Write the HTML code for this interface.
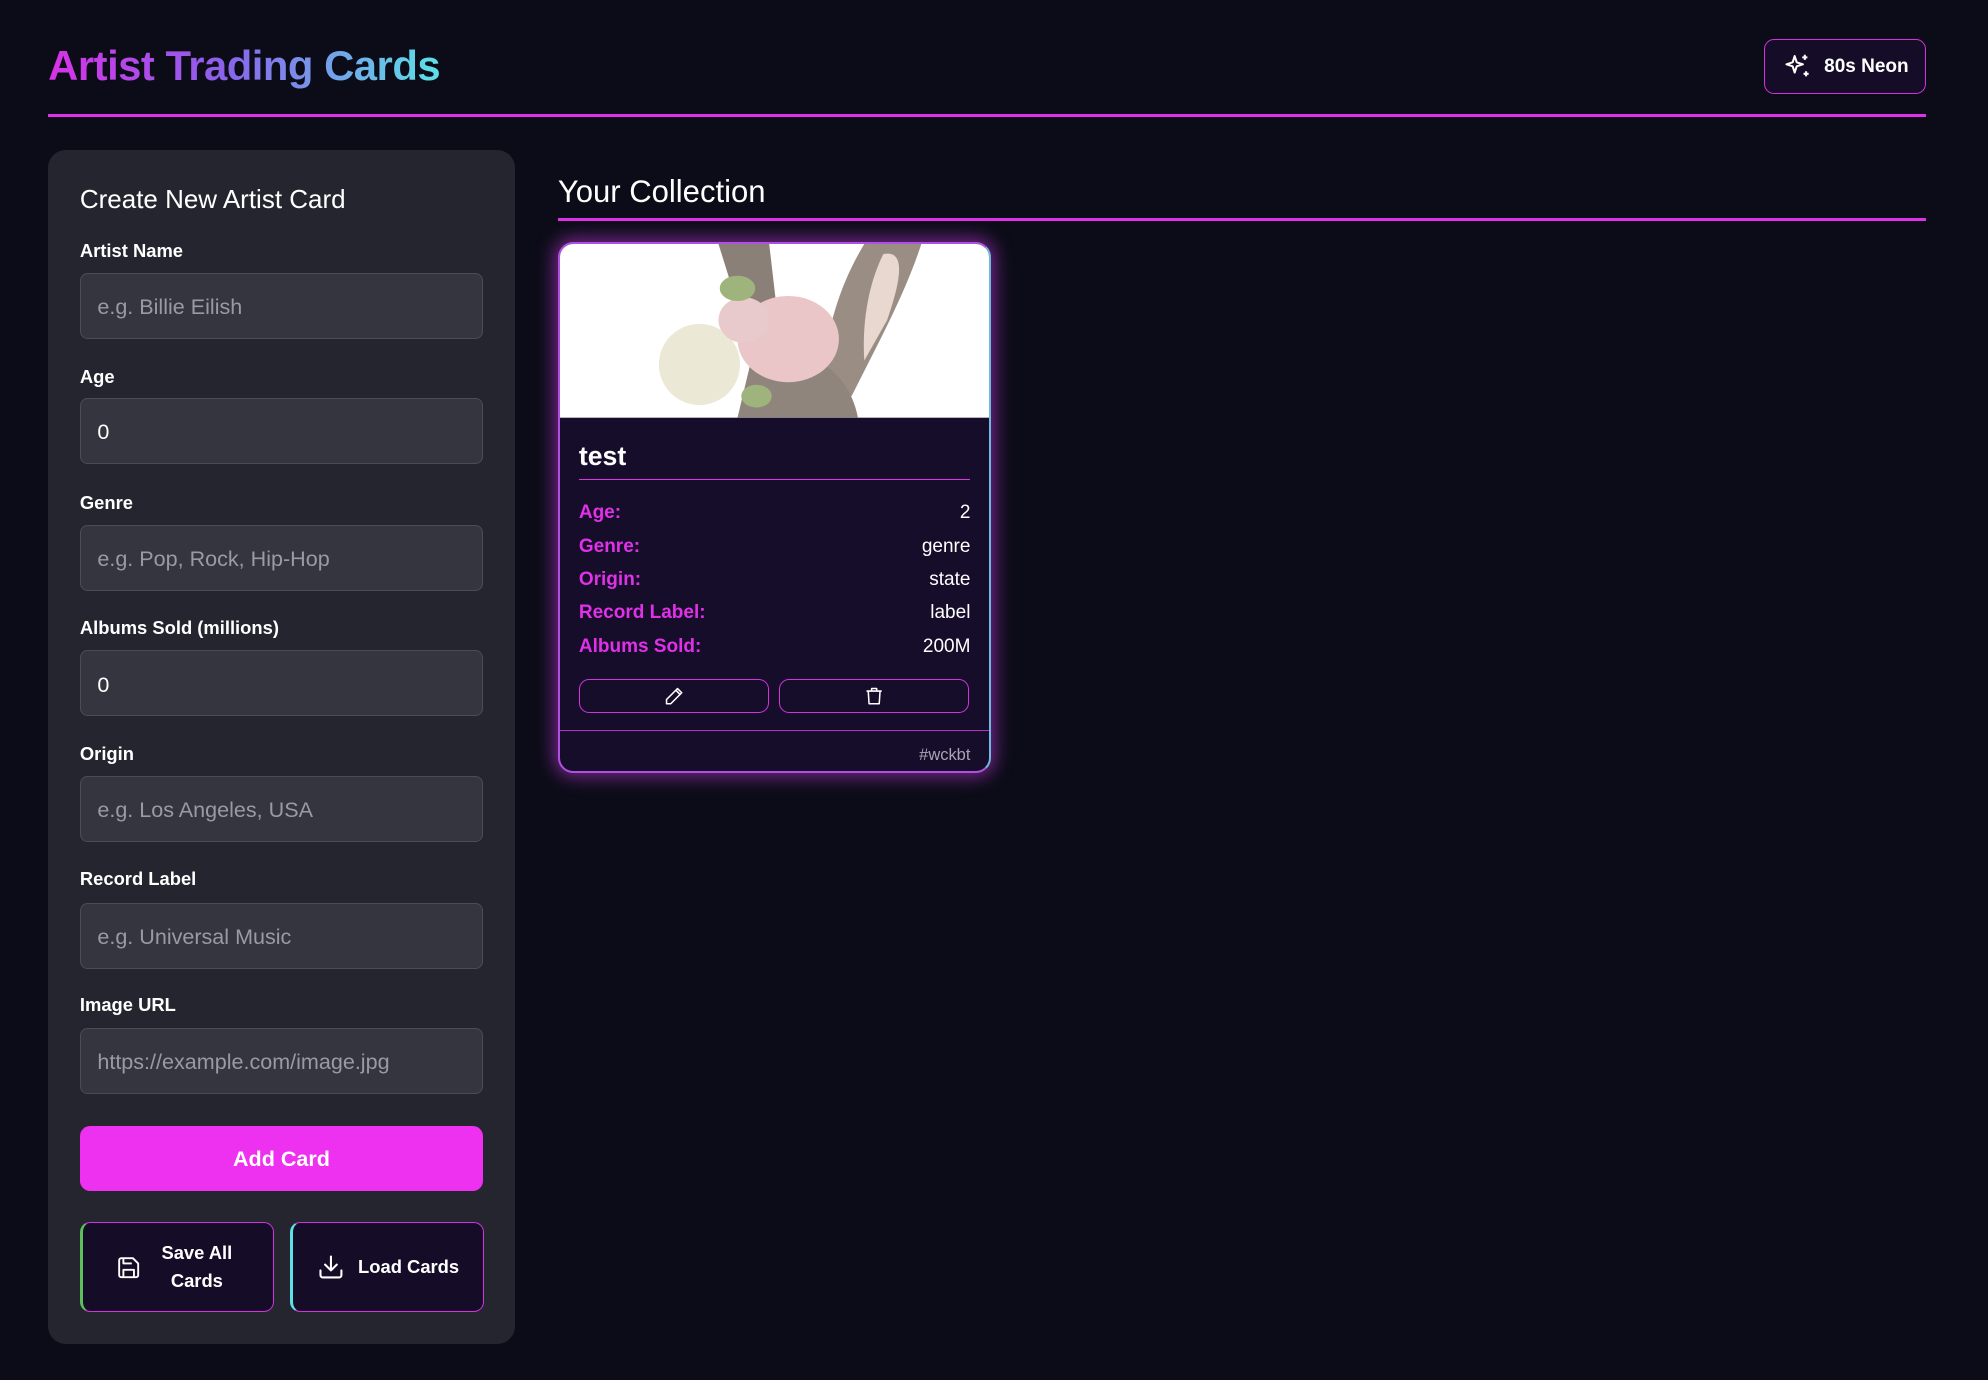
<!DOCTYPE html>
<html><head><meta charset="utf-8">
<style>
*{box-sizing:border-box;margin:0;padding:0}
html,body{background:#0c0c18;width:1988px;height:1380px;overflow:hidden}
#w{zoom:1.26786;width:1568px;height:1088px;position:relative;font-family:"Liberation Sans",sans-serif;color:#fff}
.a{position:absolute}
h1{position:absolute;left:38px;top:33px;font-size:33px;font-weight:bold;background:linear-gradient(90deg,#d832e6,#8a62ea 45%,#5be2e8);-webkit-background-clip:text;background-clip:text;color:transparent;letter-spacing:-0.4px}
.neon{left:1391px;top:31px;width:128px;height:43px;border:1px solid #d630e0;border-radius:8px;background:#150d27;font-size:15px;font-weight:bold;display:flex;align-items:center;padding-left:14px;gap:9px}
.line{height:2px;background:#e030e8}
.panel{left:38px;top:118px;width:368px;height:942px;background:#25252f;border-radius:14px}
.lbl{left:63px;font-size:14.5px;font-weight:bold;color:#fff}
.inp{left:63px;width:318px;height:52px;background:#35353f;border:1px solid #4c4c57;border-radius:6px;font-size:17px;color:#9a9aa2;padding-left:13px;padding-top:2px;display:flex;align-items:center}
.inp.v{color:#fff}
.btn2{top:964px;height:71px;width:153px;border:1px solid #d630e0;border-radius:8px;background:#150d27;font-size:14.5px;font-weight:bold;display:flex;align-items:center;justify-content:center;gap:10px;text-align:center;line-height:22px}
.card{left:440px;top:191px;width:342px;height:419px;border-radius:12px;background:#150d2a;box-shadow:0 0 14px 3px rgba(200,60,230,.55);border:2px solid #b050e0;border-right-color:#70b8e0;overflow:hidden}
.row{left:15px;right:15px;display:flex;justify-content:space-between;font-size:15px}
.row b{color:#e030e8}
.sb{top:343px;height:27px;width:150px;border:1px solid #d630e0;border-radius:8px;display:flex;align-items:center;justify-content:center}
</style></head><body><div id="w">
<h1>Artist Trading Cards</h1>
<div class="a neon"><svg width="24" height="24" viewBox="0 0 24 24" fill="none" stroke="#fff" stroke-width="1.6" stroke-linejoin="round"><path d="M10 4l1.6 4.9L16.5 10.5l-4.9 1.6L10 17l-1.6-4.9L3.5 10.5l4.9-1.6z"/><path d="M18 3v4M16 5h4M19 16v4M17 18h4"/></svg>80s Neon</div>
<div class="a line" style="left:38px;top:90px;width:1481px"></div>
<div class="a panel"></div>
<div class="a" style="left:63px;top:145px;font-size:20.5px">Create New Artist Card</div>
<div class="a lbl" style="top:189px">Artist Name</div><div class="a inp" style="top:215px">e.g. Billie Eilish</div>
<div class="a lbl" style="top:289px">Age</div><div class="a inp v" style="top:314px">0</div>
<div class="a lbl" style="top:388px">Genre</div><div class="a inp" style="top:414px">e.g. Pop, Rock, Hip-Hop</div>
<div class="a lbl" style="top:487px">Albums Sold (millions)</div><div class="a inp v" style="top:513px">0</div>
<div class="a lbl" style="top:586px">Origin</div><div class="a inp" style="top:612px">e.g. Los Angeles, USA</div>
<div class="a lbl" style="top:685px">Record Label</div><div class="a inp" style="top:712px">e.g. Universal Music</div>
<div class="a lbl" style="top:784px">Image URL</div><div class="a inp" style="top:811px">https://example.com/image.jpg</div>
<div class="a" style="left:63px;top:888px;width:318px;height:51px;background:#ee30f0;border-radius:8px;font-size:17px;font-weight:bold;display:flex;align-items:center;justify-content:center;padding-top:2px">Add Card</div>
<div class="a btn2" style="left:63px;border-left:3px solid #5cbf5c"><svg width="20" height="20" viewBox="0 0 24 24" fill="none" stroke="#fff" stroke-width="1.8" stroke-linejoin="round"><path d="M5 3h11l5 5v11a2 2 0 0 1-2 2H5a2 2 0 0 1-2-2V5a2 2 0 0 1 2-2z"/><path d="M7 3v5h8M7 21v-7h10v7"/></svg><span style="padding:0 6px">Save All<br>Cards</span></div>
<div class="a btn2" style="left:229px;border-left:3px solid #5ee0e8"><svg width="22" height="22" viewBox="0 0 24 24" fill="none" stroke="#fff" stroke-width="1.8" stroke-linecap="round" stroke-linejoin="round"><path d="M12 3v12M7 10l5 5 5-5M3 15v4a2 2 0 0 0 2 2h14a2 2 0 0 0 2-2v-4"/></svg>Load Cards</div>
<div class="a" style="left:440px;top:137px;font-size:24.5px">Your Collection</div>
<div class="a line" style="left:440px;top:172px;width:1079px"></div>
<div class="a card">
 <svg class="a" style="left:0;top:0" width="342" height="137" viewBox="0 0 342 137"><rect width="342" height="137" fill="#fff"/>
  <path d="M125 0 L165 0 L172 60 L150 80Z" fill="#8a8078"/>
  <path d="M240 0 L285 0 C272 40 250 80 230 120 L205 110 C212 60 222 30 240 0Z" fill="#9a8e84"/>
  <path d="M255 8 C270 5 272 20 258 60 L240 92 C238 60 244 30 255 8Z" fill="#e8d8d0"/>
  <path d="M150 95 C170 75 225 85 235 137 L140 137Z" fill="#8f857c"/>
  <ellipse cx="110" cy="95" rx="32" ry="32" fill="#ece8d6"/>
  <ellipse cx="180" cy="75" rx="40" ry="34" fill="#ebc6c8"/>
  <ellipse cx="145" cy="60" rx="20" ry="18" fill="#e8cacc"/>
  <ellipse cx="140" cy="35" rx="14" ry="10" fill="#9fb47c"/>
  <ellipse cx="155" cy="120" rx="12" ry="9" fill="#9fb47c"/>
 </svg>
 <div class="a" style="left:15px;top:155px;font-size:21px;font-weight:bold">test</div>
 <div class="a" style="left:15px;right:15px;top:185px;height:1px;background:#e030e8"></div>
 <div class="a row" style="top:203px"><b>Age:</b><span>2</span></div>
 <div class="a row" style="top:230px"><b>Genre:</b><span>genre</span></div>
 <div class="a row" style="top:256px"><b>Origin:</b><span>state</span></div>
 <div class="a row" style="top:282px"><b>Record Label:</b><span>label</span></div>
 <div class="a row" style="top:309px"><b>Albums Sold:</b><span>200M</span></div>
 <div class="a sb" style="left:15px"><svg width="16" height="16" viewBox="0 0 24 24" fill="none" stroke="#fff" stroke-width="1.8" stroke-linejoin="round"><path d="M16 3l5 5L8 21H3v-5z"/><path d="M14 5l5 5"/></svg></div>
 <div class="a sb" style="left:173px"><svg width="16" height="16" viewBox="0 0 24 24" fill="none" stroke="#fff" stroke-width="1.8" stroke-linejoin="round"><path d="M3 6h18M9 6V3h6v3M5 6l1 15h12l1-15"/></svg></div>
 <div class="a" style="left:0;right:0;top:383px;height:1px;background:#b030c8"></div>
 <div class="a" style="right:15px;top:396px;font-size:13px;color:#a8a4b4">#wckbt</div>
</div>
</div></body></html>
